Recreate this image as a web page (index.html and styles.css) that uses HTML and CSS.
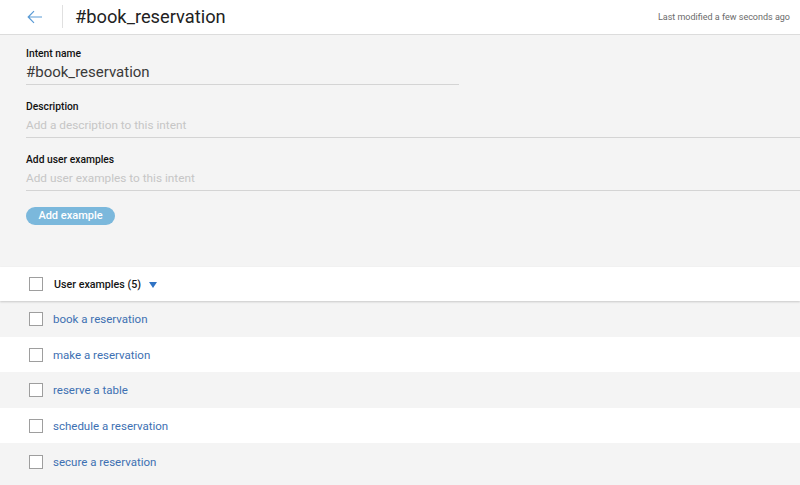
FILE: index.html
```html
<!DOCTYPE html>
<html>
<head>
<meta charset="utf-8">
<link rel="stylesheet" href="styles.css">
</head>
<body>
<header class="topbar">
  <div class="back">
    <svg width="16" height="14" viewBox="0 0 16 14"><path d="M15 7H1.5M7 1.2L1.2 7L7 12.8" fill="none" stroke="#5a9bd5" stroke-width="1.2"/></svg>
  </div>
  <div class="divider"></div>
  <h1 class="title">#book_reservation</h1>
  <div class="modified">Last modified a few seconds ago</div>
</header>
<main class="main">
  <section class="form">
    <label class="label">Intent name</label>
    <div class="input name">#book_reservation</div>
    <label class="label">Description</label>
    <div class="input placeholder">Add a description to this intent</div>
    <label class="label">Add user examples</label>
    <div class="input placeholder">Add user examples to this intent</div>
    <button class="btn">Add example</button>
  </section>
  <section class="table">
    <div class="thead">
      <span class="check"></span>
      <span class="th">User examples (5)</span>
      <svg class="caret" width="8" height="6" viewBox="0 0 8 6"><path d="M0 0H8L4 6Z" fill="#2f73c4"/></svg>
    </div>
    <div class="row"><span class="check"></span><a class="ex">book a reservation</a></div>
    <div class="row"><span class="check"></span><a class="ex">make a reservation</a></div>
    <div class="row"><span class="check"></span><a class="ex">reserve a table</a></div>
    <div class="row"><span class="check"></span><a class="ex">schedule a reservation</a></div>
    <div class="row last"><span class="check"></span><a class="ex">secure a reservation</a></div>
  </section>
</main>
</body>
</html>
```
FILE: styles.css
```css
* { box-sizing: border-box; }
html, body { margin: 0; height: 100%; }
body {
  font-family: Roboto, "Noto Sans", sans-serif;
  background: #f4f4f4;
  color: #222;
  overflow: hidden;
}
.topbar {
  height: 35px;
  background: #fff;
  border-bottom: 1px solid #dcdcdc;
  display: flex;
  align-items: center;
  padding: 0 10px 0 27px;
}
.back { width: 16px; height: 14px; display: flex; margin-top: -1px; }
.divider {
  width: 1px;
  height: 23px;
  background: #e0e0e0;
  margin-left: 19px;
  margin-right: 12px;
  margin-top: -1px;
}
.title {
  margin: 0;
  font-size: 18.3px;
  font-weight: 400;
  color: #222;
  margin-top: -2px;
}
.modified {
  margin-left: auto;
  font-size: 9px;
  color: #6b6b6b;
}
.form {
  padding: 12px 0 0 26px;
  display: flex;
  flex-direction: column;
  align-items: flex-start;
}
.label {
  font-size: 10.3px;
  font-weight: 500;
  line-height: 14px;
  color: #111;
  margin-bottom: 1px;
}
.input {
  width: 100%;
  height: 23px;
  border-bottom: 1px solid #d4d4d4;
  font-size: 11.8px;
  line-height: 21px;
  margin-bottom: 15px;
}
.input.name {
  width: 433px;
  font-size: 15px;
  color: #3a3a3a;
}
.placeholder { color: #c6c6c6; }
.btn {
  margin-top: 1px;
  width: 89px;
  height: 18px;
  border: none;
  border-radius: 9px;
  background: #7bb8dc;
  color: #fff;
  font-family: inherit;
  font-size: 11px;
  font-weight: 500;
  padding: 0;
  line-height: 18px;
}
.table { margin-top: 42px; }
.thead {
  height: 34px;
  background: #fff;
  display: flex;
  align-items: center;
  padding-left: 29px;
  box-shadow: 0 1px 2px rgba(0,0,0,0.18);
  position: relative;
  z-index: 1;
}
.th {
  font-size: 10.7px;
  font-weight: 500;
  color: #151515;
  margin-left: 11px;
}
.caret { margin-left: 8px; margin-top: 1px; }
.check {
  width: 14px;
  height: 14px;
  border: 1px solid #9e9e9e;
  background: #fff;
  flex: none;
}
.row {
  height: 35.5px;
  display: flex;
  align-items: center;
  padding-left: 29px;
  padding-top: 1px;
}
.row:nth-child(even) { background: #f4f4f4; }
.row:nth-child(odd) { background: #fff; }
.row.last { height: 45px; padding-bottom: 9px; }
.ex {
  font-size: 11.5px;
  color: #3d70b2;
  margin-left: 10px;
}
```
